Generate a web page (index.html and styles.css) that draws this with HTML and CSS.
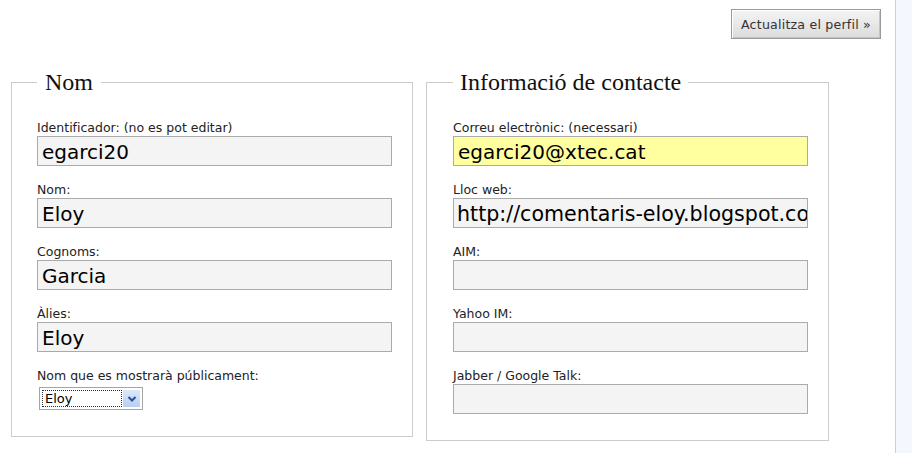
FILE: index.html
```html
<!DOCTYPE html>
<html lang="ca">
<head>
<meta charset="utf-8">
<title>Perfil</title>
<link rel="stylesheet" href="styles.css">
</head>
<body>
<div class="page">
  <main class="main">
    <div class="topbar">
      <button class="btn" type="button">Actualitza el perfil »</button>
    </div>
    <div class="columns">
      <fieldset class="box box-left">
        <legend>Nom</legend>
        <div class="row">
          <label class="lbl">Identificador: (no es pot editar)</label>
          <div class="field">egarci20</div>
        </div>
        <div class="row">
          <label class="lbl">Nom:</label>
          <div class="field">Eloy</div>
        </div>
        <div class="row">
          <label class="lbl">Cognoms:</label>
          <div class="field">Garcia</div>
        </div>
        <div class="row">
          <label class="lbl">Àlies:</label>
          <div class="field">Eloy</div>
        </div>
        <div class="row">
          <label class="lbl">Nom que es mostrarà públicament:</label>
          <div class="select">
            <span class="select-text">Eloy</span>
            <span class="select-btn">
              <svg width="10" height="8" viewBox="0 0 10 8"><path d="M1.5 2 L5 5.5 L8.5 2" fill="none" stroke="#2a4f9a" stroke-width="2"/></svg>
            </span>
          </div>
        </div>
      </fieldset>
      <fieldset class="box box-right">
        <legend>Informació de contacte</legend>
        <div class="row">
          <label class="lbl">Correu electrònic: (necessari)</label>
          <div class="field field-yellow">egarci20@xtec.cat</div>
        </div>
        <div class="row">
          <label class="lbl">Lloc web:</label>
          <div class="field field-url"><span class="url">http://comentaris-eloy.blogspot.co</span></div>
        </div>
        <div class="row">
          <label class="lbl">AIM:</label>
          <div class="field"></div>
        </div>
        <div class="row">
          <label class="lbl">Yahoo IM:</label>
          <div class="field"></div>
        </div>
        <div class="row">
          <label class="lbl">Jabber / Google Talk:</label>
          <div class="field"></div>
        </div>
      </fieldset>
    </div>
  </main>
  <aside class="side"></aside>
</div>
</body>
</html>
```
FILE: styles.css
```css
html, body {
  margin: 0;
  padding: 0;
  background: #fff;
}
.page {
  display: flex;
  width: 912px;
  height: 453px;
  overflow: hidden;
}
.main {
  width: 895px;
  flex: none;
  border-right: 1px solid #cfcfcf;
}
.side {
  flex: 1;
  background: #f4f8fe;
}
.topbar {
  display: flex;
  justify-content: flex-end;
  padding: 9px 14px 0 0;
  height: 30px;
}
.btn {
  box-sizing: border-box;
  width: 150px;
  height: 30px;
  margin: 0;
  padding: 0;
  font-family: "DejaVu Sans", sans-serif;
  font-size: 12.6px;
  color: #333;
  background: linear-gradient(#f4f4f4, #dcdcdc);
  border: 1px solid #9a9a9a;
  box-shadow: inset 1px 1px 0 #fff, inset -1px -1px 0 #c4c4c4;
  letter-spacing: 0.2px;
}
.columns {
  display: flex;
  align-items: flex-start;
  gap: 13px;
  padding: 29px 0 0 11px;
}
.box {
  margin: 0;
  border: 1px solid #cccccc;
  padding: 24px 0 26px 25px;
  box-sizing: border-box;
}
.box-left { width: 402px; }
.box-right { width: 403px; padding-left: 26px; }
.box legend {
  font-family: "Liberation Serif", serif;
  font-size: 24px;
  line-height: 28px;
  padding: 0 8px;
  margin-left: 0;
  color: #111;
}
.box-right legend { padding: 0 7px; }
.row {
  display: flex;
  flex-direction: column;
  align-items: flex-start;
  margin-top: 16px;
}
.row:first-of-type { margin-top: 0; }
.lbl {
  font-family: "DejaVu Sans", sans-serif;
  font-size: 12.5px;
  line-height: 15px;
  color: #222;
}
.field {
  box-sizing: border-box;
  margin-top: 1px;
  width: 355px;
  height: 30px;
  background: #f4f4f4;
  border: 1px solid #aaaaaa;
  font-family: "DejaVu Sans", sans-serif;
  font-size: 20px;
  line-height: 30px;
  padding: 0 3px 0 4px;
  color: #000;
  white-space: nowrap;
  overflow: hidden;
}
.field-yellow { background: #ffffa0; }
.field-url { padding-left: 3px; }
.url { font-size: 20.6px; }
.select {
  box-sizing: border-box;
  margin-top: 4px;
  margin-left: 2px;
  width: 104px;
  height: 23px;
  border: 1px solid #a5a5a5;
  background: #fff;
  display: flex;
  align-items: stretch;
  padding: 2px;
  gap: 1px;
}
.select-text {
  flex: 1;
  border: 1px dotted #333;
  font-family: "DejaVu Sans", sans-serif;
  font-size: 13px;
  line-height: 15px;
  padding-left: 2px;
  color: #000;
}
.select-btn {
  width: 17px;
  background: linear-gradient(#dde8fb, #b9cdf2);
  display: flex;
  align-items: center;
  justify-content: center;
}
```
